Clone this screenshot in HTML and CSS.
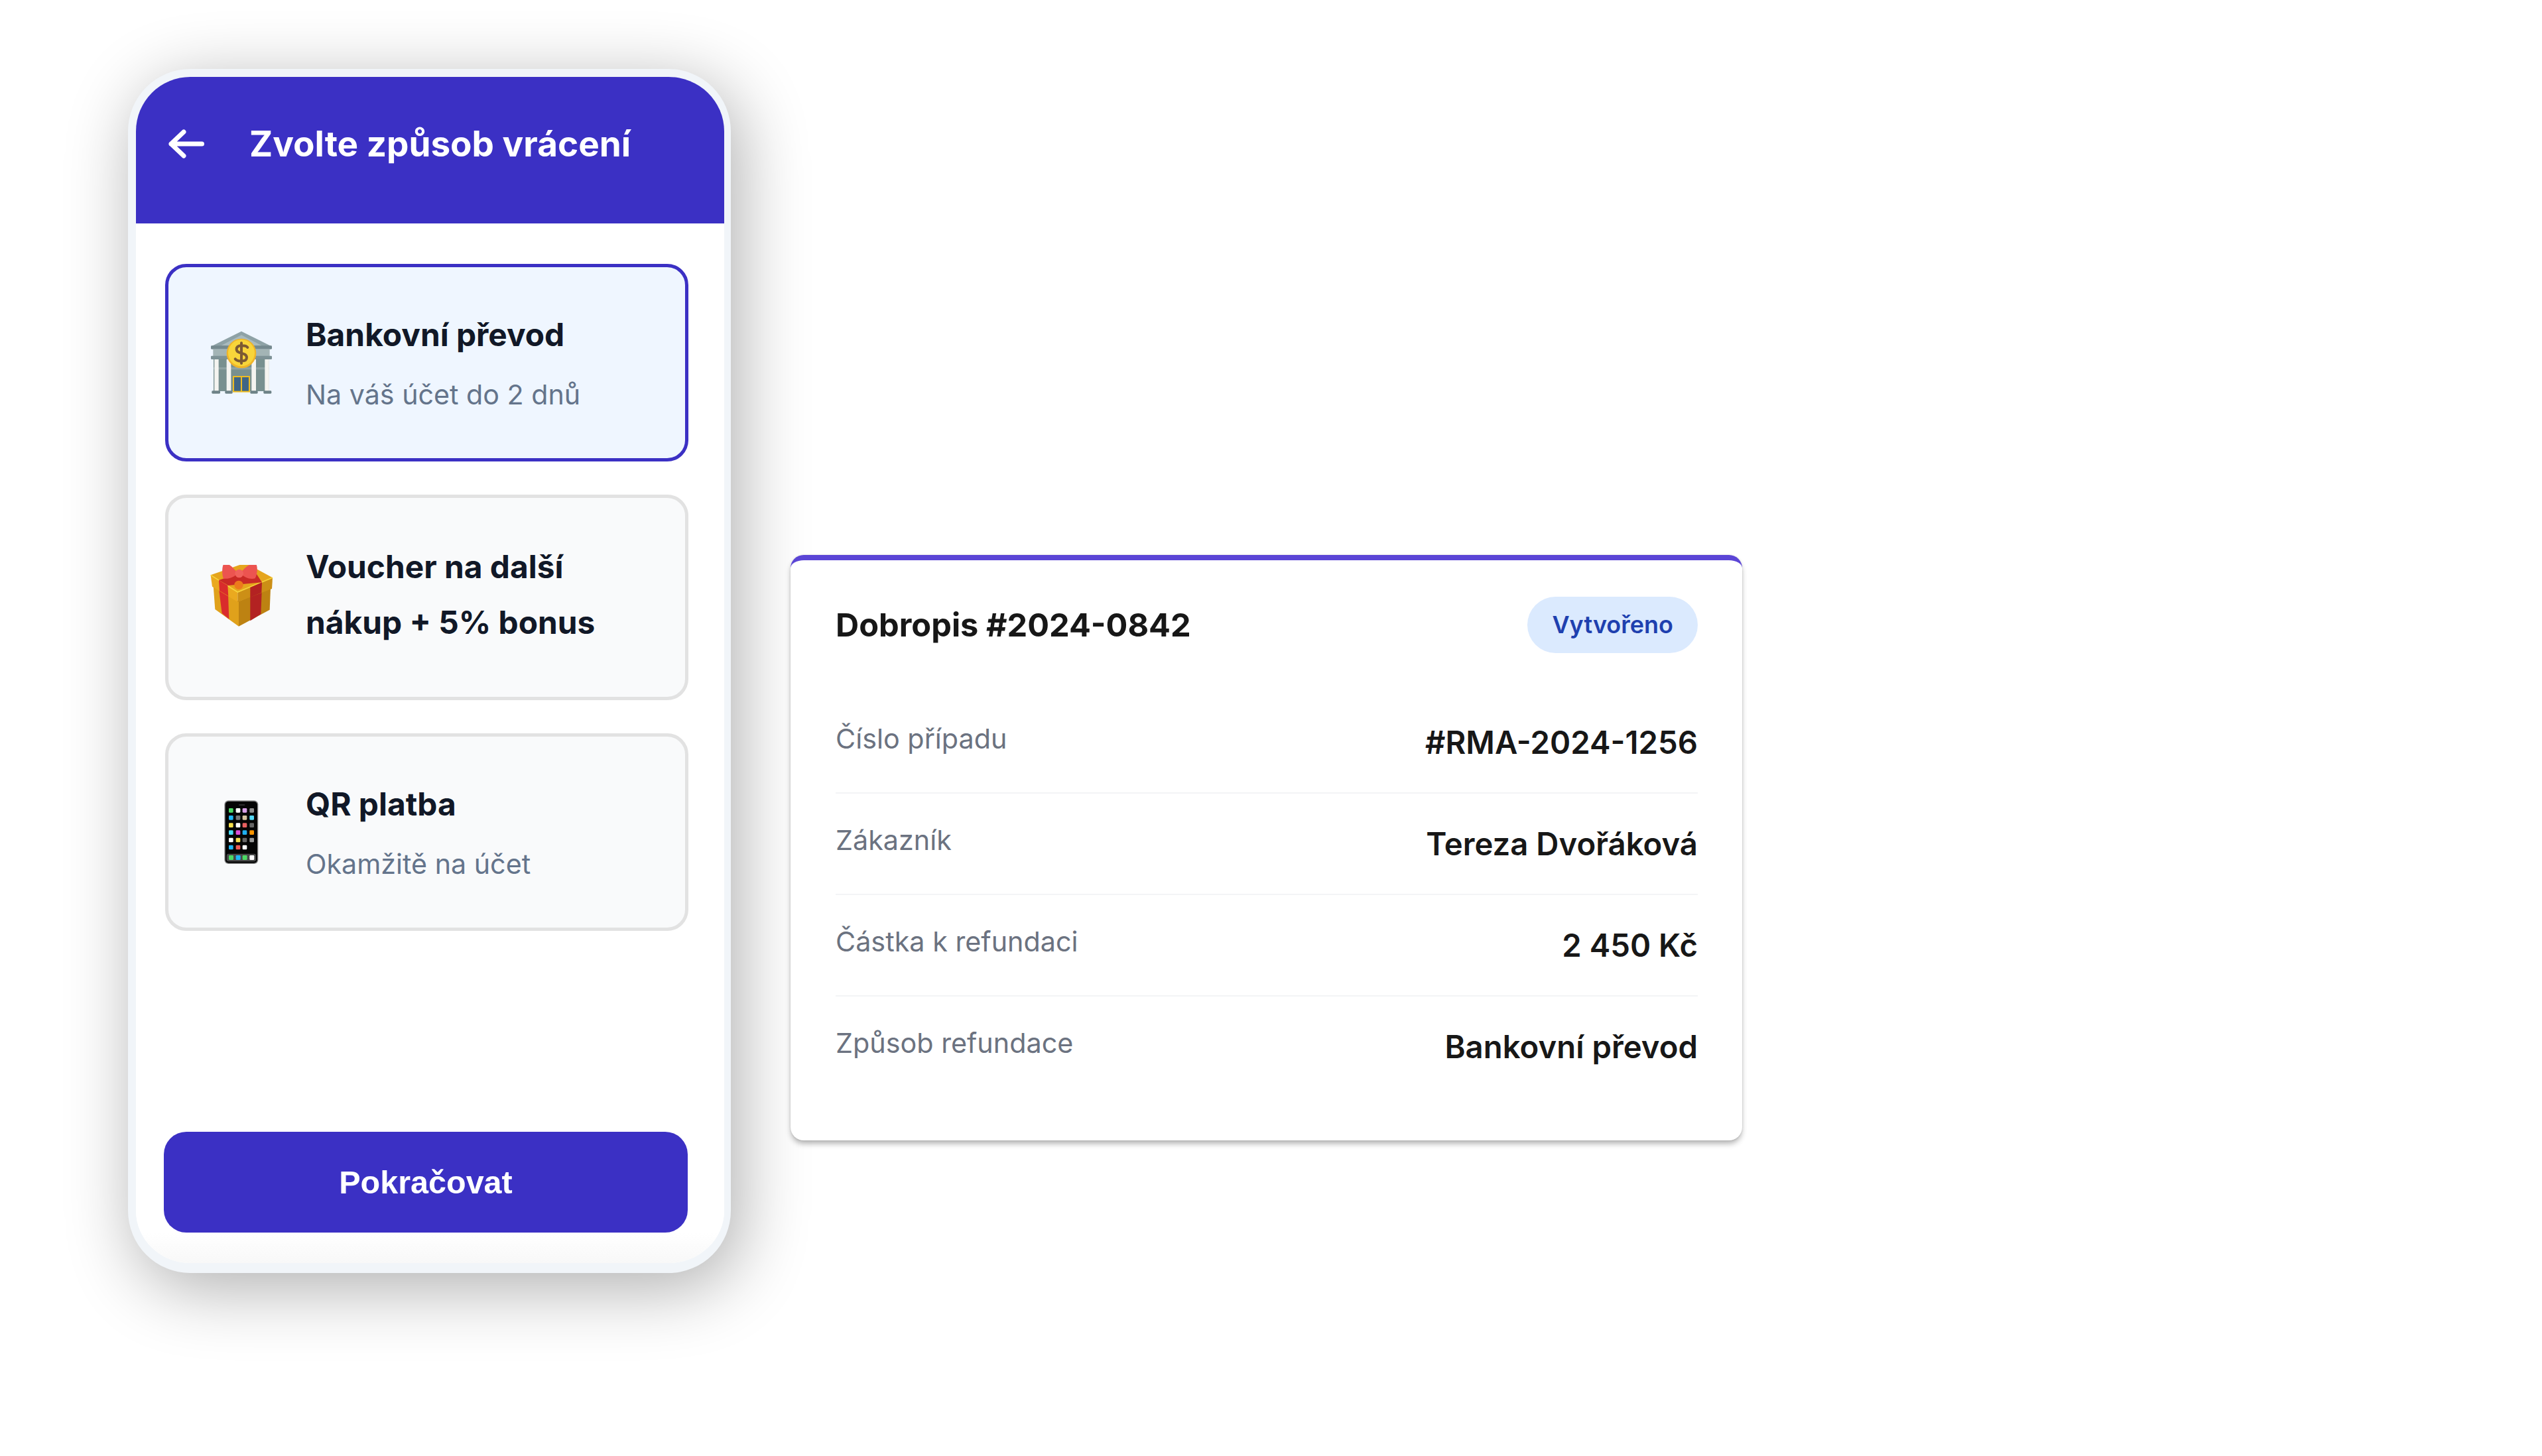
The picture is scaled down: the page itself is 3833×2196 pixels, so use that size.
FILE: index.html
```html
<!DOCTYPE html>
<html lang="cs">
<head>
    <meta charset="UTF-8">
    <meta name="viewport" content="width=device-width, initial-scale=1.0">
    <title>Zvolte způsob vrácení</title>
    <link rel="stylesheet" href="styles.css">
</head>
<body>
    <div class="phone">
        <header class="phone-header">
            <svg class="back-icon" viewBox="0 0 62 50" fill="none" stroke="#fff" stroke-width="7" stroke-linecap="round" stroke-linejoin="round">
                <path d="M52.5 25H6M25 7 6 25l19 18"/>
            </svg>
            <h1 class="phone-title">Zvolte způsob vrácení</h1>
        </header>

        <div class="options">
            <div class="option option-selected">
                <svg class="option-icon" viewBox="75 60 294 294">
                    <!-- bank -->
                    <path d="M222 65 88 132h268z" fill="#8ea2a6"/>
                    <path d="M222 82 130 130h184z" fill="#a9babd"/>
                    <rect x="84" y="130" width="276" height="16" rx="4" fill="#75898e"/>
                    <rect x="94" y="146" width="256" height="32" fill="#a3b4b5"/>
                    <rect x="84" y="176" width="276" height="16" rx="4" fill="#7e9296"/>
                    <rect x="96" y="190" width="250" height="146" fill="#78908f"/>
                    <rect x="96" y="228" width="250" height="10" fill="#8ea3a3"/>
                    <rect x="100" y="192" width="19" height="144" fill="#f4f4f0"/>
                    <rect x="155" y="192" width="20" height="144" fill="#f4f4f0"/>
                    <rect x="268" y="192" width="20" height="144" fill="#f4f4f0"/>
                    <rect x="328" y="192" width="19" height="144" fill="#f4f4f0"/>
                    <rect x="186" y="270" width="72" height="68" fill="#3f6585" stroke="#eebc22" stroke-width="6"/>
                    <rect x="219" y="270" width="6" height="68" fill="#eebc22"/>
                    <rect x="88" y="334" width="38" height="13" rx="4" fill="#6d8287"/>
                    <rect x="148" y="334" width="34" height="13" rx="4" fill="#6d8287"/>
                    <rect x="262" y="334" width="34" height="13" rx="4" fill="#6d8287"/>
                    <rect x="322" y="334" width="36" height="13" rx="4" fill="#6d8287"/>
                    <circle cx="222" cy="165" r="67" fill="#f0b428"/>
                    <circle cx="222" cy="163" r="60" fill="#f8d53a"/>
                    <path d="M250 138c-8-10-50-14-50 8 0 24 46 12 46 38 0 22-44 18-52 6M222 118v92" fill="none" stroke="#7c5a33" stroke-width="12" stroke-linecap="round"/>
                </svg>
                <div class="option-text">
                    <div class="option-name">Bankovní převod</div>
                    <div class="option-desc">Na váš účet do 2 dnů</div>
                </div>
            </div>

            <div class="option">
                <svg class="option-icon" viewBox="75 67 294 294">
                    <!-- gift -->
                    <path d="M95 160 210 232v113L103 268z" fill="#e0a11b"/>
                    <path d="M210 232 354 172l-4 98-140 75z" fill="#bd8212"/>
                    <path d="M120 175 162 200l4 112-32-26z" fill="#d92c2c"/>
                    <path d="M262 212 314 190l-4 100-48 30z" fill="#b32222"/>
                    <path d="M83 113 240 58l123 67-158 65z" fill="#e5a51d"/>
                    <path d="M83 113 205 190v45L90 165z" fill="#eaa91f"/>
                    <path d="M205 190 363 125l-3 50-155 60z" fill="#cc8f16"/>
                    <path d="M83 113 205 190 363 125" fill="none" stroke="#f7d43c" stroke-width="5"/>
                    <path d="M120 136 160 160l3 48-40-24z" fill="#d92c2c"/>
                    <path d="M262 169 315 146l-2 46-51 22z" fill="#b32222"/>
                    <path d="M120 136 275 84l40 62-153 14z" fill="#c92a26"/>
                    <circle cx="210" cy="158" r="20" fill="#ec7a1c"/>
                    <path d="M205 105C180 70 150 50 140 66c-6 14-6 44 0 62 20 6 50-6 65-23z" fill="#ec5450"/>
                    <path d="M218 105C240 70 280 50 290 66c6 14 4 44-6 62-22 6-50-4-66-23z" fill="#ec5450"/>
                    <circle cx="212" cy="106" r="19" fill="#f0625c"/>
                </svg>
                <div class="option-text option-text-long">
                    <div class="option-name">Voucher na další nákup + 5% bonus</div>
                </div>
            </div>

            <div class="option">
                <svg class="option-icon" viewBox="75 81 294 294">
                    <!-- phone -->
                    <rect x="145" y="85" width="153" height="287" rx="18" fill="#8a8a8a"/>
                    <rect x="149" y="89" width="145" height="279" rx="15" fill="#050505"/>
                    <rect x="210" y="103" width="28" height="4" rx="2" fill="#3a3a3a"/>
                    <rect x="165" y="120" width="20" height="20" rx="4" fill="#4cd964"/>
                    <rect x="197" y="120" width="20" height="20" rx="4" fill="#fff"/>
                    <rect x="227" y="120" width="20" height="20" rx="4" fill="#d9a0e8"/>
                    <rect x="259" y="120" width="20" height="20" rx="4" fill="#8e8e8e"/>
                    <rect x="165" y="153" width="20" height="20" rx="4" fill="#1fb6f5"/>
                    <rect x="197" y="153" width="20" height="20" rx="4" fill="#777"/>
                    <rect x="227" y="153" width="20" height="20" rx="4" fill="#d6c3a0"/>
                    <rect x="259" y="153" width="20" height="20" rx="4" fill="#55d8f5"/>
                    <rect x="165" y="187" width="20" height="20" rx="4" fill="#f7e14c"/>
                    <rect x="197" y="187" width="20" height="20" rx="4" fill="#fff"/>
                    <rect x="227" y="187" width="20" height="20" rx="4" fill="#e86060"/>
                    <rect x="259" y="187" width="20" height="20" rx="4" fill="#666"/>
                    <rect x="165" y="220" width="20" height="20" rx="4" fill="#4adcf5"/>
                    <rect x="197" y="220" width="20" height="20" rx="4" fill="#d94fd9"/>
                    <rect x="227" y="220" width="20" height="20" rx="4" fill="#1faff0"/>
                    <rect x="259" y="220" width="20" height="20" rx="4" fill="#ff9500"/>
                    <rect x="165" y="254" width="20" height="20" rx="4" fill="#fff"/>
                    <rect x="197" y="254" width="20" height="20" rx="4" fill="#f5e050"/>
                    <rect x="227" y="254" width="20" height="20" rx="4" fill="#666"/>
                    <rect x="259" y="254" width="20" height="20" rx="4" fill="#999"/>
                    <rect x="165" y="287" width="20" height="20" rx="4" fill="#1fb6f5"/>
                    <rect x="197" y="287" width="20" height="20" rx="4" fill="#ee5a55"/>
                    <rect x="227" y="287" width="20" height="20" rx="4" fill="#fff"/>
                    <rect x="155" y="326" width="133" height="35" rx="9" fill="#474747"/>
                    <rect x="165" y="333" width="21" height="21" rx="4" fill="#4cd964"/>
                    <rect x="197" y="333" width="21" height="21" rx="4" fill="#1fb6f5"/>
                    <rect x="227" y="333" width="21" height="21" rx="4" fill="#4cd964"/>
                    <rect x="259" y="333" width="21" height="21" rx="4" fill="#fff"/>
                </svg>
                <div class="option-text">
                    <div class="option-name">QR platba</div>
                    <div class="option-desc">Okamžitě na účet</div>
                </div>
            </div>
        </div>

        <div class="phone-footer">
            <button class="continue-btn">Pokračovat</button>
        </div>
    </div>

    <div class="credit-note">
        <div class="note-header">
            <h2 class="note-title">Dobropis #2024-0842</h2>
            <span class="note-badge">Vytvořeno</span>
        </div>
        <div class="note-row">
            <span class="note-label">Číslo případu</span>
            <span class="note-value">#RMA-2024-1256</span>
        </div>
        <div class="note-row">
            <span class="note-label">Zákazník</span>
            <span class="note-value">Tereza Dvořáková</span>
        </div>
        <div class="note-row">
            <span class="note-label">Částka k refundaci</span>
            <span class="note-value">2 450 Kč</span>
        </div>
        <div class="note-row">
            <span class="note-label">Způsob refundace</span>
            <span class="note-value">Bankovní převod</span>
        </div>
    </div>
</body>
</html>
```

FILE: styles.css
```css
body {
    margin: 0;
    background-color: #fff;
    font-family: Inter, "Noto Sans", sans-serif;
    display: flex;
    align-items: flex-start;
    gap: 90px;
    padding: 104px 0 0 193px;
    min-height: 2092px;
    overflow: hidden;
}

/* phone */
.phone {
    width: 909px;
    height: 1816px;
    box-sizing: border-box;
    border: 12px solid #f1f5f9;
    border-right-width: 10px;
    border-bottom-width: 15px;
    border-radius: 94px;
    background-color: #fff;
    box-shadow: 12px 22px 105px rgba(0, 0, 0, 0.32);
    display: flex;
    flex-direction: column;
    overflow: hidden;
    flex-shrink: 0;
}
.phone-header {
    height: 221px;
    box-sizing: border-box;
    background-color: #3b30c4;
    display: flex;
    align-items: center;
    gap: 62px;
    padding: 0 0 20px 47px;
}
.back-icon {
    width: 62px;
    height: 50px;
}
.phone-title {
    margin: 0;
    color: #fff;
    font-size: 53px;
    font-weight: 700;
}

/* options */
.options {
    display: flex;
    flex-direction: column;
    gap: 50px;
    padding: 61px 54px 0 44px;
}
.option {
    display: flex;
    align-items: center;
    gap: 48px;
    padding: 60px 60px 60px 61px;
    border: 5px solid #e2e2e2;
    border-radius: 32px;
    background-color: #f9fafb;
}
.option-selected {
    border-color: #3b30c4;
    background-color: #eff6ff;
}
.option-icon {
    width: 98px;
    height: 98px;
    flex-shrink: 0;
    filter: blur(0.7px);
}
.option-text-long {
    padding-top: 2px;
}
.option-name {
    font-size: 47.8px;
    font-weight: 680;
    line-height: 84px;
    margin-bottom: 12px;
    color: #111827;
}
.option-text-long .option-name {
    margin-bottom: 10px;
}
.option-desc {
    font-size: 41.2px;
    line-height: 72px;
    color: #64748b;
}

/* footer */
.phone-footer {
    margin-top: auto;
    padding: 0 55px 46px 42px;
    background: linear-gradient(to bottom, #fff 77%, #f8f8f8);
}
.continue-btn {
    display: block;
    width: 100%;
    height: 152px;
    border: none;
    border-radius: 34px;
    background-color: #3b30c4;
    color: #fff;
    font-family: "Liberation Sans", Arial, sans-serif;
    font-size: 48.5px;
    font-weight: 700;
}

/* credit note */
.credit-note {
    width: 1435px;
    height: 883px;
    box-sizing: border-box;
    margin-top: 733px;
    padding: 55px 67px 0 68px;
    border-top: 8px solid #5b45d6;
    border-radius: 20px;
    background-color: #fff;
    box-shadow: 0 6px 9px -1px rgba(0, 0, 0, 0.3), 0 0 3px rgba(0, 0, 0, 0.12);
    flex-shrink: 0;
}
.note-header {
    display: flex;
    justify-content: space-between;
    align-items: center;
    margin-bottom: 59px;
}
.note-title {
    margin: 0;
    font-size: 48.7px;
    font-weight: 680;
    color: #171717;
}
.note-badge {
    height: 85px;
    line-height: 85px;
    padding: 0 37px;
    border-radius: 43px;
    background-color: #dbeafe;
    color: #1e40af;
    font-size: 36px;
    font-weight: 600;
}
.note-row {
    display: flex;
    justify-content: space-between;
    align-items: flex-start;
    padding: 39px 0 38px;
    border-bottom: 2px solid #f3f4f6;
}
.note-row:last-child {
    border-bottom: none;
}
.note-label {
    font-size: 41.3px;
    line-height: 62px;
    color: #6b7280;
}
.note-value {
    font-size: 47.3px;
    font-weight: 630;
    line-height: 74px;
    color: #171717;
}
```
